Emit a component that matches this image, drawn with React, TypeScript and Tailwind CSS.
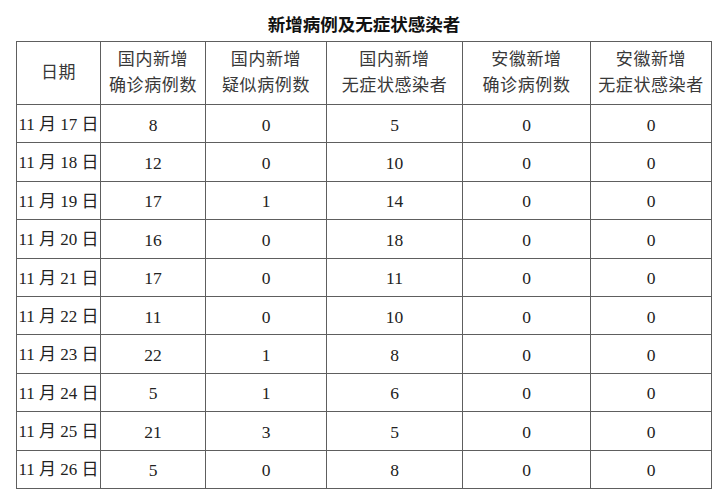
import React from "react";

const headers: string[][] = [
  ["日期"],
  ["国内新增", "确诊病例数"],
  ["国内新增", "疑似病例数"],
  ["国内新增", "无症状感染者"],
  ["安徽新增", "确诊病例数"],
  ["安徽新增", "无症状感染者"],
];

const rows: [string, string, string, string, string, string][] = [
  ["17", "8", "0", "5", "0", "0"],
  ["18", "12", "0", "10", "0", "0"],
  ["19", "17", "1", "14", "0", "0"],
  ["20", "16", "0", "18", "0", "0"],
  ["21", "17", "0", "11", "0", "0"],
  ["22", "11", "0", "10", "0", "0"],
  ["23", "22", "1", "8", "0", "0"],
  ["24", "5", "1", "6", "0", "0"],
  ["25", "21", "3", "5", "0", "0"],
  ["26", "5", "0", "8", "0", "0"],
];

export default function App() {
  return (
    <div
      className="w-[722px] h-[500px] bg-white pt-[13px] text-[#1a1a1a]"
      style={{ fontFamily: '"Liberation Serif", "Noto Sans CJK SC", serif' }}
    >
      <div className="w-[696px] ml-[16px]">
        <div className="h-[24px] leading-[24px] text-center text-[17.5px] font-bold mb-[4px] text-[#111]">
          新增病例及无症状感染者
        </div>
        <div className="grid grid-cols-[83px_104px_120px_135px_127px_120px] grid-rows-[62px_repeat(10,37.4px)] gap-px p-px bg-[#5e5e5e]">
          {headers.map((h, i) => (
            <div
              key={i}
              className="bg-white flex flex-col items-center justify-center text-[17px] tracking-[0.6px] leading-[26px] text-[#383838]"
            >
              {h.map((t, j) => (
                <div key={j} className="whitespace-nowrap">
                  {t}
                </div>
              ))}
            </div>
          ))}
          {rows.map((r, i) => (
            <React.Fragment key={i}>
              <div className="bg-white flex items-center justify-center text-[17px] whitespace-nowrap pt-[2px] text-[#222]">
                11 月 {r[0]} 日
              </div>
              {r.slice(1).map((v, j) => (
                <div
                  key={j}
                  className="bg-white flex items-center justify-center text-[17.5px] pt-[2px] text-[#222]"
                >
                  {v}
                </div>
              ))}
            </React.Fragment>
          ))}
        </div>
      </div>
    </div>
  );
}
